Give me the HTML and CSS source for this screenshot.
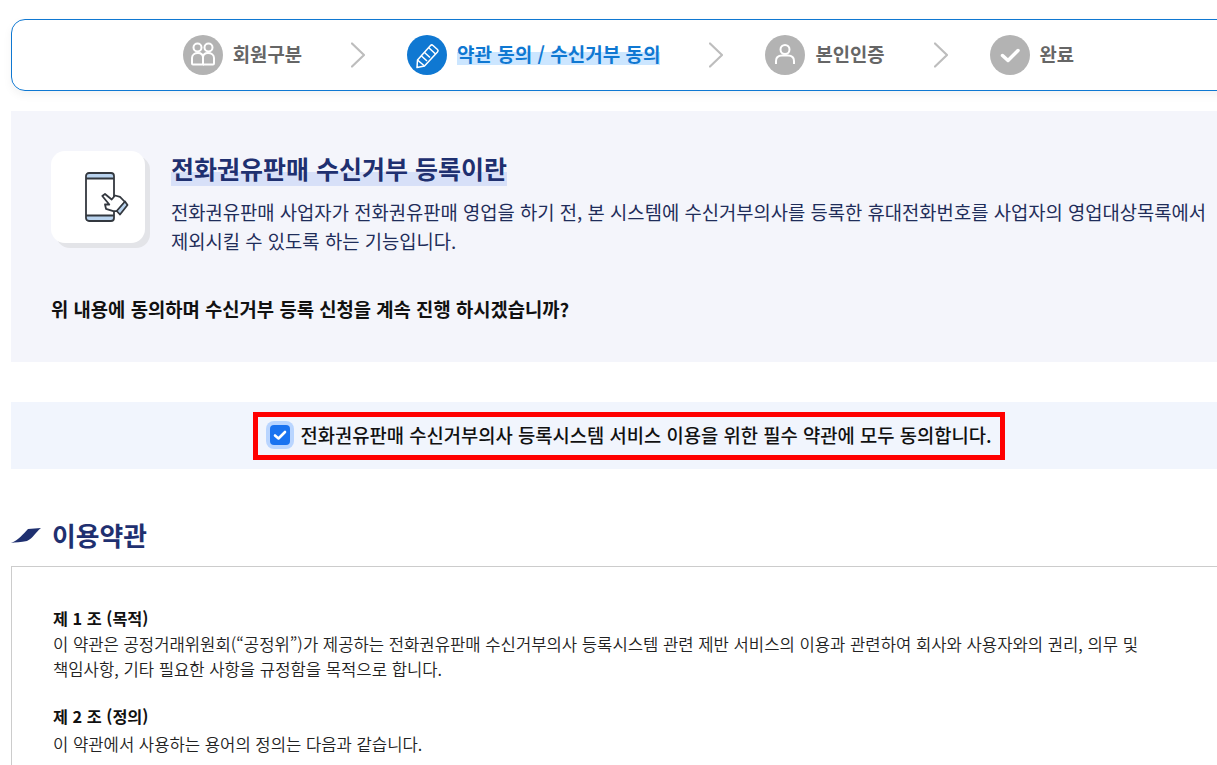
FILE: index.html
```html
<!DOCTYPE html>
<html lang="ko">
<head>
    <meta charset="UTF-8">
    <meta name="viewport" content="width=device-width, initial-scale=1.0">
    <title>수신거부 등록 - 약관 동의</title>
    <link rel="stylesheet" href="styles.css">
</head>
<body>
    <div class="container">
        <ol class="steps">
            <li class="step">
                <span class="step-icon">
                    <svg viewBox="0 0 40 40" width="40" height="40" fill="none" stroke="#fff" stroke-width="2">
                        <circle cx="14.500" cy="12.500" r="4"/>
                        <circle cx="25.500" cy="12.500" r="4"/>
                        <path d="M10 29.500h10v-7c0-3-2-4.500-5-4.500s-6 1.500-6 5v5.500q0 1 1 1z"/>
                        <path d="M20 29.500h10q1 0 1-1v-5.500c0-3.500-3-5-6-5s-5 1.500-5 4.500"/>
                    </svg>
                </span>
                <span class="step-label">회원구분</span>
            </li>
            <li class="step-arrow">
                <svg viewBox="0 0 14 26" width="14" height="26" fill="none" stroke="#bdbdbd" stroke-width="2.200" stroke-linecap="round"><path d="M1 1.500 13 13 1 24.500"/></svg>
            </li>
            <li class="step active">
                <span class="step-icon">
                    <svg viewBox="0 0 40 40" width="40" height="40" fill="none" stroke="#fff" stroke-width="1.500" stroke-linejoin="round">
                        <path d="M10.500 25 23.500 10.500q1.200-1.200 2.500 0l4.500 4q1.200 1.200 0 2.500L17.500 31l-7.500 1.500z"/>
                        <path d="M21.500 12.500l7 6.500M17.500 17.500l5.500 5M14.500 21l5.500 5M10.500 25l7 6"/>
                    </svg>
                </span>
                <span class="step-label"><span class="mark">약관 동의 / 수신거부 동의</span></span>
            </li>
            <li class="step-arrow">
                <svg viewBox="0 0 14 26" width="14" height="26" fill="none" stroke="#bdbdbd" stroke-width="2.200" stroke-linecap="round"><path d="M1 1.500 13 13 1 24.500"/></svg>
            </li>
            <li class="step">
                <span class="step-icon">
                    <svg viewBox="0 0 40 40" width="40" height="40" fill="none" stroke="#fff" stroke-width="2">
                        <circle cx="20" cy="14.500" r="4.500"/>
                        <path d="M11 29v-3c0-3.500 2.500-5.500 6-5.500h6c3.500 0 6 2 6 5.500v3"/>
                    </svg>
                </span>
                <span class="step-label">본인인증</span>
            </li>
            <li class="step-arrow">
                <svg viewBox="0 0 14 26" width="14" height="26" fill="none" stroke="#bdbdbd" stroke-width="2.200" stroke-linecap="round"><path d="M1 1.500 13 13 1 24.500"/></svg>
            </li>
            <li class="step">
                <span class="step-icon">
                    <svg viewBox="0 0 40 40" width="40" height="40" fill="none" stroke="#fff" stroke-width="3.500" stroke-linecap="round" stroke-linejoin="round">
                        <path d="M12.500 20.500l5.500 5 10-10"/>
                    </svg>
                </span>
                <span class="step-label">완료</span>
            </li>
        </ol>

        <section class="intro">
            <div class="intro-head">
                <div class="intro-icon">
                    <svg viewBox="0 0 46 52" width="46" height="52" fill="none" stroke="#33383f" stroke-width="1.800" stroke-linejoin="round">
                        <path d="M3 3h26v5H3z" fill="#b9d3ee" stroke="none"/>
                        <path d="M3 44h26v5H3z" fill="#b9d3ee" stroke="none"/>
                        <rect x="2" y="2" width="28" height="48" rx="3"/>
                        <path d="M2 7.500h28M2 44.500h28"/>
                        <path d="M18.300 25 21 23l6.700 5.500L31 24.500l5 1.300 5 5.200-8 9-3.700.2-7.300-2.400-1-4.300h4.300z" fill="#fff"/>
                        <path d="M41 30.500l2.500 3.500L36 43.500 32.700 40z" fill="#b9d3ee"/>
                    </svg>
                </div>
                <div class="intro-text">
                    <h2 class="intro-title"><span class="mark-title">전화권유판매 수신거부 등록이란</span></h2>
                    <p>전화권유판매 사업자가 전화권유판매 영업을 하기 전, 본 시스템에 수신거부의사를 등록한 휴대전화번호를 사업자의 영업대상목록에서 제외시킬 수 있도록 하는 기능입니다.</p>
                </div>
            </div>
            <p class="intro-question">위 내용에 동의하며 수신거부 등록 신청을 계속 진행 하시겠습니까?</p>
        </section>

        <div class="agree">
            <label class="agree-box">
                <span class="check">
                    <svg viewBox="0 0 20 20" width="20" height="20" fill="none" stroke="#fff" stroke-width="2.600" stroke-linecap="round" stroke-linejoin="round"><path d="M5 10.500l3.500 3 6.500-6.500"/></svg>
                </span>
                전화권유판매 수신거부의사 등록시스템 서비스 이용을 위한 필수 약관에 모두 동의합니다.
            </label>
        </div>

        <h3 class="section-title">
            <svg viewBox="0 0 30 15" width="30" height="15"><path d="M0 15C8 12 12 6 17 1L30 0C24 5 22 10 16 13 10 14 4 14.500 0 15z" fill="#1f3070"/></svg>
            이용약관
        </h3>

        <div class="terms">
            <h4>제 1 조 (목적)</h4>
            <p>이 약관은 공정거래위원회(“공정위”)가 제공하는 전화권유판매 수신거부의사 등록시스템 관련 제반 서비스의 이용과 관련하여 회사와 사용자와의 권리, 의무 및 책임사항, 기타 필요한 사항을 규정함을 목적으로 합니다.</p>
            <h4>제 2 조 (정의)</h4>
            <p>이 약관에서 사용하는 용어의 정의는 다음과 같습니다.</p>
        </div>
    </div>
</body>
</html>
```

FILE: styles.css
```css
html, body {
    margin: 0;
    padding: 0;
    height: 765px;
    overflow: hidden;
    background: #fff;
}
body {
    font-family: "Noto Sans CJK KR", "Noto Sans", sans-serif;
    color: #222;
    word-break: keep-all;
}
.container {
    width: 1236px;
    margin-left: 11px;
    padding-top: 19px;
}
.steps {
    list-style: none;
    margin: 0;
    padding: 0 1px 0 0;
    height: 72px;
    box-sizing: border-box;
    display: flex;
    justify-content: center;
    align-items: center;
    border: 1px solid #0f78d2;
    border-radius: 14px;
    box-shadow: 0 4px 10px rgba(0, 0, 0, 0.05);
}
.step {
    display: flex;
    align-items: center;
    gap: 10px;
}
.step-icon {
    width: 40px;
    height: 40px;
    border-radius: 50%;
    background: #b3b3b3;
    display: block;
}
.step-icon svg {
    display: block;
}
.step-label {
    font-size: 18.800px;
    font-weight: 700;
    color: #666;
    line-height: 26px;
    padding-bottom: 3px;
}
.step.active .step-icon {
    background: #0f78d2;
}
.step.active .step-label {
    color: #0f78d2;
    font-size: 19px;
}
.mark {
    background: linear-gradient(transparent 45%, #cce6ff 45%, #cce6ff 92%, transparent 92%);
}
.step-arrow {
    margin: 0 42px 0 49px;
    height: 26px;
}
.step-arrow svg {
    display: block;
}
.intro {
    margin-top: 20px;
    height: 251px;
    box-sizing: border-box;
    padding: 40px 30px 40px 40px;
    background: #f4f5fb;
}
.intro-head {
    display: flex;
    gap: 26px;
}
.intro-icon {
    flex: none;
    width: 94px;
    height: 92px;
    border-radius: 14px;
    background: #fff;
    box-shadow: 5px 5px 0 #e3e4e8;
    display: flex;
    align-items: center;
    justify-content: center;
}
.intro-icon svg {
    margin-left: 18px;
}
.intro-text {
    margin-top: -1px;
}
.intro-title {
    margin: 0;
    font-size: 25px;
    font-weight: 700;
    line-height: 36px;
    color: #1f3070;
}
.mark-title {
    background: linear-gradient(transparent 62%, #d7e0f8 62%);
}
.intro-text p {
    margin: 11px 0 0;
    font-size: 18.780px;
    line-height: 29px;
    color: #1f2d5a;
}
.intro-question {
    margin: 41px 0 0;
    font-size: 18.800px;
    font-weight: 700;
    line-height: 26px;
    color: #111;
}
.agree {
    margin-top: 40px;
    height: 67px;
    background: #f1f5fd;
    display: flex;
    align-items: center;
    justify-content: center;
}
.agree-box {
    display: flex;
    align-items: center;
    gap: 10px;
    height: 48px;
    box-sizing: border-box;
    padding: 0 8px 2px 12px;
    border: 5px solid #f00;
    font-size: 18.750px;
    font-weight: 500;
    color: #111;
}
.check {
    width: 20px;
    height: 20px;
    border-radius: 4px;
    background: #1a73f0;
    box-shadow: 0 0 0 4px #b9d5ff;
    display: block;
}
.check svg {
    display: block;
}
.section-title {
    margin: 49px 0 0;
    height: 34px;
    display: flex;
    align-items: center;
    gap: 11px;
    font-size: 25.800px;
    font-weight: 700;
    line-height: 34px;
    color: #1f3070;
}
.terms {
    margin-top: 14px;
    padding: 37px 100px 0 41px;
    border-top: 1px solid #ccc;
    border-left: 1px solid #ccc;
    height: 300px;
}
.terms h4 {
    margin: 0;
    font-size: 16.300px;
    font-weight: 700;
    line-height: 28px;
    color: #111;
}
.terms p {
    margin: 0 0 20px;
    font-size: 16.650px;
    font-weight: 350;
    line-height: 25px;
    color: #222;
}
.terms p:last-child {
    margin-top: 2px;
}
```
